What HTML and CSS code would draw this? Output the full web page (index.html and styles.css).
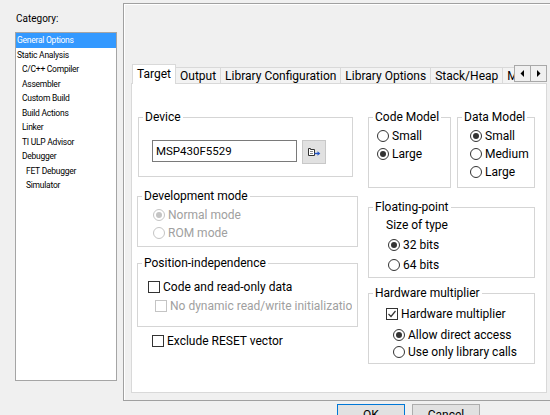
FILE: index.html
```html
<!DOCTYPE html>
<html lang="en">
<head>
    <meta charset="UTF-8">
    <title>Options - General Options</title>
    <link rel="stylesheet" href="styles.css">
</head>
<body>
    <div class="main">
        <div class="category">
            <div class="category-label">Category:</div>
            <ul class="category-list">
                <li class="selected">General Options</li>
                <li>Static Analysis</li>
                <li class="sub">C/C++ Compiler</li>
                <li class="sub">Assembler</li>
                <li class="sub">Custom Build</li>
                <li class="sub">Build Actions</li>
                <li class="sub">Linker</li>
                <li class="sub">TI ULP Advisor</li>
                <li class="sub">Debugger</li>
                <li class="sub2">FET Debugger</li>
                <li class="sub2">Simulator</li>
            </ul>
        </div>

        <div class="frame">
            <div class="tab-control">
                <div class="tabstrip">
                    <div class="tab-list">
                        <div class="tab active">Target</div>
                        <div class="tab">Output</div>
                        <div class="tab">Library Configuration</div>
                        <div class="tab">Library Options</div>
                        <div class="tab">Stack/Heap</div>
                        <div class="tab">MISRA-C:2004</div>
                    </div>
                    <div class="tab-scroll">
                        <div class="scroll-btn">
                            <svg width="5" height="7" viewBox="0 0 5 7"><path d="M4 0v7L0.5 3.5z" fill="#000"/></svg>
                        </div>
                        <div class="scroll-btn">
                            <svg width="5" height="7" viewBox="0 0 5 7"><path d="M1 0v7l3.5-3.5z" fill="#000"/></svg>
                        </div>
                    </div>
                </div>

                <div class="tab-page">
                    <div class="col-left">
                        <fieldset class="group group-device">
                            <legend>Device</legend>
                            <div class="group-body body-device">
                                <div class="device-row">
                                    <div class="device-input">MSP430F5529</div>
                                    <div class="device-btn">
                                        <svg width="14" height="10" viewBox="0 0 14 10">
                                            <path d="M1.5 1.5h2v1h4v6h-6z" fill="#fff" stroke="#333"/>
                                            <path d="M3 4.5h3M3 6.5h3" stroke="#8a8a8a"/>
                                            <path d="M7.5 6.5h3.5" stroke="#2456c8" stroke-width="1.4"/>
                                            <path d="M10.5 4.3l2.8 2.2-2.8 2.2z" fill="#2456c8"/>
                                        </svg>
                                    </div>
                                </div>
                            </div>
                        </fieldset>

                        <fieldset class="group group-dev">
                            <legend>Development mode</legend>
                            <div class="group-body body-dev">
                                <div class="opt disabled"><span class="radio on"></span><span>Normal mode</span></div>
                                <div class="opt disabled"><span class="radio"></span><span>ROM mode</span></div>
                            </div>
                        </fieldset>

                        <fieldset class="group group-pos">
                            <legend>Position-independence</legend>
                            <div class="group-body body-pos">
                                <div class="opt h19"><span class="check"></span><span>Code and read-only data</span></div>
                                <div class="opt h19 sub-opt disabled"><span class="check"></span><span>No dynamic read/write initialization</span></div>
                            </div>
                        </fieldset>

                        <div class="opt exclude"><span class="check"></span><span>Exclude RESET vector</span></div>
                    </div>

                    <div class="col-right">
                        <div class="models">
                            <fieldset class="group group-code">
                                <legend>Code Model</legend>
                                <div class="group-body body-code">
                                    <div class="opt"><span class="radio"></span><span>Small</span></div>
                                    <div class="opt"><span class="radio on"></span><span>Large</span></div>
                                </div>
                            </fieldset>
                            <fieldset class="group group-data">
                                <legend>Data Model</legend>
                                <div class="group-body body-data">
                                    <div class="opt"><span class="radio on"></span><span>Small</span></div>
                                    <div class="opt"><span class="radio"></span><span>Medium</span></div>
                                    <div class="opt"><span class="radio"></span><span>Large</span></div>
                                </div>
                            </fieldset>
                        </div>

                        <fieldset class="group group-float">
                            <legend>Floating-point</legend>
                            <div class="group-body body-float">
                                <div class="size-label">Size of type</div>
                                <div class="opt h20"><span class="radio on"></span><span>32 bits</span></div>
                                <div class="opt h20"><span class="radio"></span><span>64 bits</span></div>
                            </div>
                        </fieldset>

                        <fieldset class="group group-hw">
                            <legend>Hardware multiplier</legend>
                            <div class="group-body body-hw">
                                <div class="opt h17">
                                    <span class="check">
                                        <svg width="10" height="10" viewBox="0 0 10 10"><path d="M1.5 5l2.5 2.5 4.5-5.5" fill="none" stroke="#333" stroke-width="1.2"/></svg>
                                    </span>
                                    <span>Hardware multiplier</span>
                                </div>
                                <div class="opt h17 hw-radio first"><span class="radio on"></span><span>Allow direct access</span></div>
                                <div class="opt h17 hw-radio"><span class="radio"></span><span>Use only library calls</span></div>
                            </div>
                        </fieldset>
                    </div>
                </div>
            </div>
        </div>
    </div>

    <div class="actions">
        <button class="btn default">OK</button>
        <button class="btn">Cancel</button>
    </div>
</body>
</html>
```

FILE: styles.css
```css
* {
    margin: 0;
    padding: 0;
    box-sizing: border-box;
}

body {
    width: 550px;
    height: 415px;
    overflow: hidden;
    background: #f0f0f0;
    font-family: Roboto, "Noto Sans", sans-serif;
    font-size: 12px;
    color: #000;
}

.main {
    display: flex;
    align-items: flex-start;
}

/* left category tree */
.category {
    width: 102px;
    margin: 12px 0 0 15px;
    flex: none;
}

.category-label {
    font-size: 10px;
    line-height: 13px;
    padding-left: 1px;
}

.category-list {
    list-style: none;
    margin-top: 7px;
    height: 349px;
    background: #fff;
    border: 1px solid #a5a5a5;
    font-size: 8.5px;
    letter-spacing: -0.25px;
    line-height: 14.5px;
}

.category-list li {
    padding-left: 1px;
    white-space: nowrap;
}

.category-list .sub {
    padding-left: 6px;
}

.category-list .sub2 {
    padding-left: 10px;
}

.category-list .selected {
    background: #3399ff;
    color: #fff;
}

/* right options frame */
.frame {
    flex: none;
    width: 430px;
    height: 398px;
    margin: 3px 0 0 6px;
    border: 1px solid #a0a0a0;
    box-shadow: inset 1px 1px 0 #fff;
    padding: 60px 0 0 7px;
}

.tab-control {
    width: 416px;
}

.tabstrip {
    display: flex;
    height: 19px;
    position: relative;
    z-index: 1;
}

.tab-list {
    display: flex;
    align-items: flex-start;
    width: 383px;
    height: 20px;
    overflow: hidden;
    padding-left: 1px;
}

.tab {
    flex: none;
    height: 16px;
    margin-top: 3px;
    margin-right: -1px;
    padding: 1px 4px 0;
    line-height: 14px;
    background: #f3f3f3;
    border: 1px solid #d9d9d9;
    border-bottom: none;
    white-space: nowrap;
}

.tab.active {
    height: 20px;
    margin-top: 0;
    padding-top: 2px;
    background: #fff;
}

.tab-scroll {
    display: flex;
    margin-top: 1px;
}

.scroll-btn {
    width: 17px;
    height: 17px;
    margin-right: -1px;
    border: 1px solid #a8a8a8;
    background: #f0f0f0;
    display: flex;
    align-items: center;
    justify-content: center;
}

.tab-page {
    height: 310px;
    background: #fff;
    border: 1px solid #d9d9d9;
    display: flex;
    padding: 26px 0 0 5px;
}

.col-left {
    width: 221px;
    flex: none;
}

.col-right {
    width: 167px;
    flex: none;
    margin-left: 10px;
}

/* group boxes */
.group {
    border: 1px solid #d5d5d5;
    min-width: 0;
    padding: 0;
}

.group legend {
    margin-left: 4px;
    padding: 0 2px;
    line-height: 15px;
}

.group-device {
    width: 215px;
    margin-left: 1px;
}

.body-device {
    padding: 15px 0 12px 13px;
}

.device-row {
    display: flex;
    align-items: flex-start;
    gap: 5px;
}

.device-input {
    width: 145px;
    height: 22px;
    border: 1px solid #7a7a7a;
    background: #fff;
    padding-left: 3px;
    line-height: 20px;
    font-size: 11.5px;
}

.device-btn {
    width: 24px;
    height: 24px;
    border: 1px solid #c8c8c8;
    background: #e1e1e1;
    display: flex;
    align-items: center;
    justify-content: center;
}

.group-dev {
    margin-top: 12px;
}

.body-dev {
    padding: 2px 0 4px 15px;
}

.group-pos {
    margin-top: 9px;
}

.body-pos {
    padding: 6px 0 11px 10px;
}

.sub-opt {
    width: 197px;
    margin-left: 7px;
    overflow: hidden;
}

.exclude {
    margin: 5px 0 0 15px;
}

.models {
    display: flex;
    gap: 6px;
}

.group-code {
    width: 83px;
}

.body-code {
    padding: 2px 0 6px 8px;
}

.group-data {
    width: 78px;
}

.body-data {
    padding: 2px 0 6px 12px;
}

.group-float {
    margin-top: 12px;
}

.body-float {
    padding: 1px 0 2px 17px;
}

.size-label {
    height: 19px;
    line-height: 19px;
}

.body-float .opt {
    margin-left: 2px;
}

.group-hw {
    margin-top: 8px;
}

.body-hw {
    padding: 4px 0 3px 17px;
}

.hw-radio {
    margin-left: 7px;
}

.hw-radio.first {
    margin-top: 4px;
}

/* radio buttons and check boxes */
.opt {
    display: flex;
    align-items: center;
    gap: 3px;
    height: 18px;
    white-space: nowrap;
}

.opt.h17 {
    height: 17px;
}

.opt.h19 {
    height: 19px;
}

.opt.h20 {
    height: 20px;
}

.radio {
    flex: none;
    width: 12px;
    height: 12px;
    border: 1px solid #333;
    border-radius: 50%;
    background: #fff;
    display: flex;
    align-items: center;
    justify-content: center;
}

.radio.on::after {
    content: "";
    width: 6px;
    height: 6px;
    border-radius: 50%;
    background: #333;
}

.check {
    flex: none;
    width: 12px;
    height: 12px;
    border: 1px solid #333;
    background: #fff;
    display: flex;
    align-items: center;
    justify-content: center;
}

.disabled {
    color: #a0a0a0;
}

.disabled .radio,
.disabled .check {
    border-color: #c4c4c4;
}

.disabled .radio.on::after {
    background: #c4c4c4;
}

/* dialog buttons */
.actions {
    display: flex;
    gap: 7px;
    margin: 3px 0 0 337px;
}

.btn {
    flex: none;
    width: 68px;
    height: 23px;
    border: 1px solid #adadad;
    background: #e1e1e1;
    font-family: inherit;
    font-size: 12px;
    line-height: 21px;
    text-align: center;
    color: #000;
}

.btn.default {
    border-color: #0078d7;
}
```
